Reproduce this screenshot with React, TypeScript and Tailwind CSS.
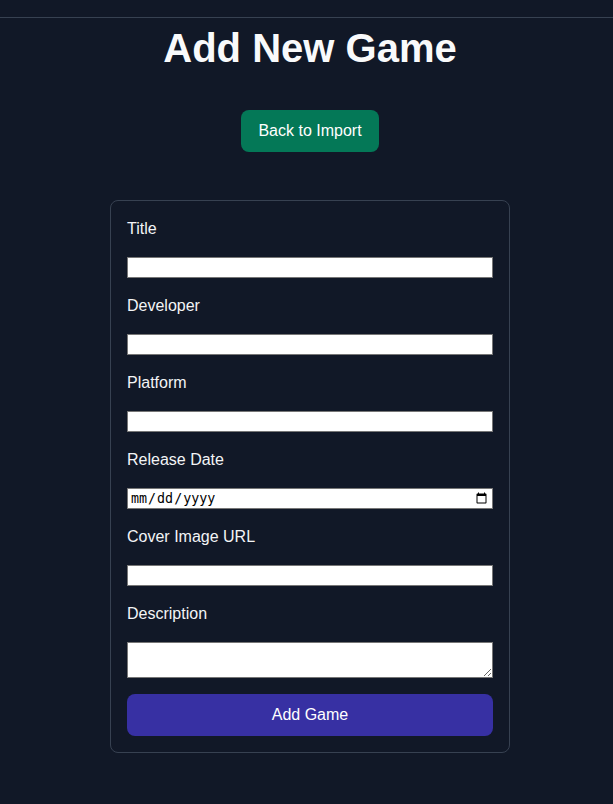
import React from "react";

const fields = [
  { label: "Title", type: "text" },
  { label: "Developer", type: "text" },
  { label: "Platform", type: "text" },
  { label: "Release Date", type: "date" },
  { label: "Cover Image URL", type: "text" },
];

export default function App() {
  return (
    <div
      className="min-h-[804px] bg-[#111827] pt-[17px] text-white"
      style={{ fontFamily: '"Liberation Sans", Arial, sans-serif' }}
    >
      <div className="border-t border-[#374151]" />
      <div className="pl-[7px] flex flex-col items-center">
        <h1 className="mt-[6px] text-[40px] leading-[48px] font-bold text-[#f9fafb]">
          Add New Game
        </h1>
        <button className="mt-[38px] rounded-lg bg-[#047857] px-[17px] py-[9px] text-[16px] leading-[24px] text-white">
          Back to Import
        </button>
        <form
          className="mt-[48px] w-[400px] rounded-lg border border-[#374151] p-4 flex flex-col gap-4"
          onSubmit={(e) => e.preventDefault()}
        >
          {fields.map((f) => (
            <React.Fragment key={f.label}>
              <label className="block text-[16px] leading-[24px] text-[#f3f4f6]">
                {f.label}
              </label>
              <input
                type={f.type}
                className="block h-[21px] w-full border border-[#767676] bg-white px-[2px] text-[13.33px] leading-[17px] text-black outline-none"
                style={
                  f.type === "date"
                    ? { fontFamily: '"DejaVu Sans Mono", monospace', colorScheme: "light" }
                    : undefined
                }
              />
            </React.Fragment>
          ))}
          <label className="block text-[16px] leading-[24px] text-[#f3f4f6]">
            Description
          </label>
          <textarea className="block h-[36px] w-full border border-[#767676] bg-white px-[2px] text-[13.33px] text-black outline-none" />
          <button
            type="submit"
            className="h-[42px] w-full rounded-lg bg-[#3730a3] text-[16px] leading-[24px] text-white"
          >
            Add Game
          </button>
        </form>
      </div>
    </div>
  );
}
